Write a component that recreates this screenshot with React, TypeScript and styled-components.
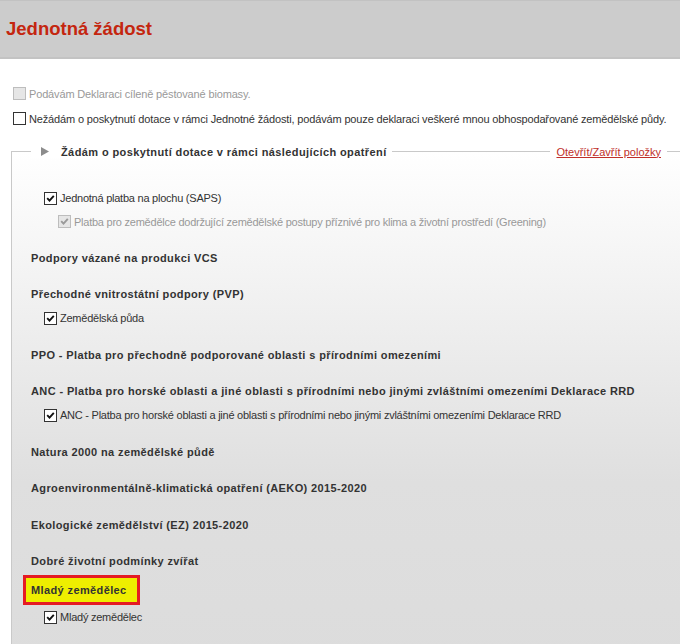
import React from "react";
import styled, { createGlobalStyle } from "styled-components";

const GlobalStyle = createGlobalStyle`
  html, body {
    margin: 0;
    padding: 0;
    background: #fff;
  }
  body {
    font-family: "Liberation Sans", Arial, sans-serif;
    font-size: 11px;
    color: #333;
    overflow: hidden;
  }
`;

const Page = styled.div`
  width: 680px;
  height: 644px;
  overflow: hidden;
`;

const Header = styled.header`
  height: 56px;
  display: flex;
  align-items: center;
  padding-left: 6px;
  background: #cccccc;
  border-top: 1px solid #c2c2c2;
  border-bottom: 2px solid #c3c3c3;
`;

const Title = styled.h1`
  margin: 0;
  font-size: 18.5px;
  font-weight: bold;
  color: #c4260f;
`;

const Main = styled.main`
  padding: 22px 0 0 11px;
`;

const CheckRow = styled.label<{
  $indent: number;
  $disabled?: boolean;
  $height?: number;
  $spacing?: number;
}>`
  display: flex;
  align-items: center;
  gap: 3px;
  height: ${(p) => p.$height ?? 24}px;
  padding-left: ${(p) => p.$indent}px;
  color: ${(p) => (p.$disabled ? "#999" : "#333")};
  letter-spacing: ${(p) => p.$spacing ?? -0.24}px;
  white-space: nowrap;
`;

const Box = styled.span<{ $disabled?: boolean }>`
  flex-shrink: 0;
  width: 13px;
  height: 13px;
  box-sizing: border-box;
  display: inline-flex;
  align-items: center;
  justify-content: center;
  border: 1px solid ${(p) => (p.$disabled ? "#bdbdbd" : "#333")};
  background: ${(p) => (p.$disabled ? "#e6e6e6" : "#fff")};
`;

const Fieldset = styled.section`
  margin-top: 20px;
  padding-bottom: 40px;
  border-top: 1px solid #c9c9c9;
  border-left: 1px solid #c9c9c9;
  background: linear-gradient(#fff 0px, #dfdfdf 330px, #dcdcdc 100%);
`;

const Legend = styled.div`
  display: flex;
  align-items: center;
  height: 17px;
  margin-top: -9px;
`;

const LegendTitle = styled.div`
  display: flex;
  align-items: center;
  gap: 12px;
  margin-left: 19px;
  padding: 0 5px 0 10px;
  background: #fff;
  font-weight: bold;
  letter-spacing: 0.4px;
  color: #333;
`;

const LegendLink = styled.a`
  margin-left: auto;
  margin-right: 13px;
  padding: 0 6px;
  background: #fff;
  color: #c0302a;
  text-decoration: underline;
  cursor: pointer;
`;

const Group = styled.div<{ $gap: number }>`
  margin-top: ${(p) => p.$gap}px;
`;

const Heading = styled.div<{ $tall?: boolean }>`
  display: flex;
  align-items: center;
  height: ${(p) => (p.$tall ? 30 : 24)}px;
  padding-left: 19px;
  font-weight: bold;
  letter-spacing: 0.38px;
  color: #333;
  white-space: nowrap;
`;

const Highlight = styled.span`
  margin-left: -8px;
  padding: 0 10px 0 5px;
  line-height: 24px;
  border: 3px solid #e51b24;
  background: #eeee00;
`;

const Checkbox: React.FC<{ checked?: boolean; disabled?: boolean }> = ({
  checked,
  disabled,
}) => (
  <Box $disabled={disabled}>
    {checked && (
      <svg width="11" height="11" viewBox="0 0 11 11">
        <path
          d="M2.2 5.2 4.5 7.6 8.8 2.8"
          fill="none"
          stroke={disabled ? "#9a9a9a" : "#111"}
          strokeWidth="1.9"
        />
      </svg>
    )}
  </Box>
);

type Item = {
  heading?: string;
  highlight?: boolean;
  checks?: { label: string; indent: number; disabled?: boolean; height?: number }[];
};

const groups: Item[] = [
  {
    checks: [
      { label: "Jednotná platba na plochu (SAPS)", indent: 32 },
      {
        label:
          "Platba pro zemědělce dodržující zemědělské postupy příznivé pro klima a životní prostředí (Greening)",
        indent: 46,
        disabled: true,
        height: 23,
      },
    ],
  },
  { heading: "Podpory vázané na produkci VCS" },
  {
    heading: "Přechodné vnitrostátní podpory (PVP)",
    checks: [{ label: "Zemědělská půda", indent: 32 }],
  },
  { heading: "PPO - Platba pro přechodně podporované oblasti s přírodními omezeními" },
  {
    heading:
      "ANC - Platba pro horské oblasti a jiné oblasti s přírodními nebo jinými zvláštními omezeními Deklarace RRD",
    checks: [
      {
        label:
          "ANC - Platba pro horské oblasti a jiné oblasti s přírodními nebo jinými zvláštními omezeními Deklarace RRD",
        indent: 32,
      },
    ],
  },
  { heading: "Natura 2000 na zemědělské půdě" },
  { heading: "Agroenvironmentálně-klimatická opatření (AEKO) 2015-2020" },
  { heading: "Ekologické zemědělství (EZ) 2015-2020" },
  { heading: "Dobré životní podmínky zvířat" },
  {
    heading: "Mladý zemědělec",
    highlight: true,
    checks: [{ label: "Mladý zemědělec", indent: 32 }],
  },
];

export default function App() {
  return (
    <Page>
      <GlobalStyle />
      <Header>
        <Title>Jednotná žádost</Title>
      </Header>
      <Main>
        <CheckRow $indent={2} $height={25} $disabled $spacing={-0.15}>
          <Checkbox disabled />
          Podávám Deklaraci cíleně pěstované biomasy.
        </CheckRow>
        <CheckRow $indent={2} $height={25} $spacing={-0.15}>
          <Checkbox />
          Nežádám o poskytnutí dotace v rámci Jednotné žádosti, podávám pouze deklaraci veškeré mnou
          obhospodařované zemědělské půdy.
        </CheckRow>
        <Fieldset>
          <Legend>
            <LegendTitle>
              <svg width="8" height="9" viewBox="0 0 8 9">
                <polygon points="0,0 8,4.5 0,9" fill="#8c8c8c" />
              </svg>
              Žádám o poskytnutí dotace v rámci následujících opatření
            </LegendTitle>
            <LegendLink>Otevřít/Zavřít položky</LegendLink>
          </Legend>
          {groups.map((g, i) => (
            <Group key={i} $gap={i === 0 ? 26 : g.highlight ? 2 : 12.5}>
              {g.heading && (
                <Heading $tall={g.highlight}>
                  {g.highlight ? <Highlight>{g.heading}</Highlight> : g.heading}
                </Heading>
              )}
              {g.checks?.map((c) => (
                <CheckRow key={c.label} $indent={c.indent} $disabled={c.disabled} $height={c.height}>
                  <Checkbox checked disabled={c.disabled} />
                  {c.label}
                </CheckRow>
              ))}
            </Group>
          ))}
        </Fieldset>
      </Main>
    </Page>
  );
}
